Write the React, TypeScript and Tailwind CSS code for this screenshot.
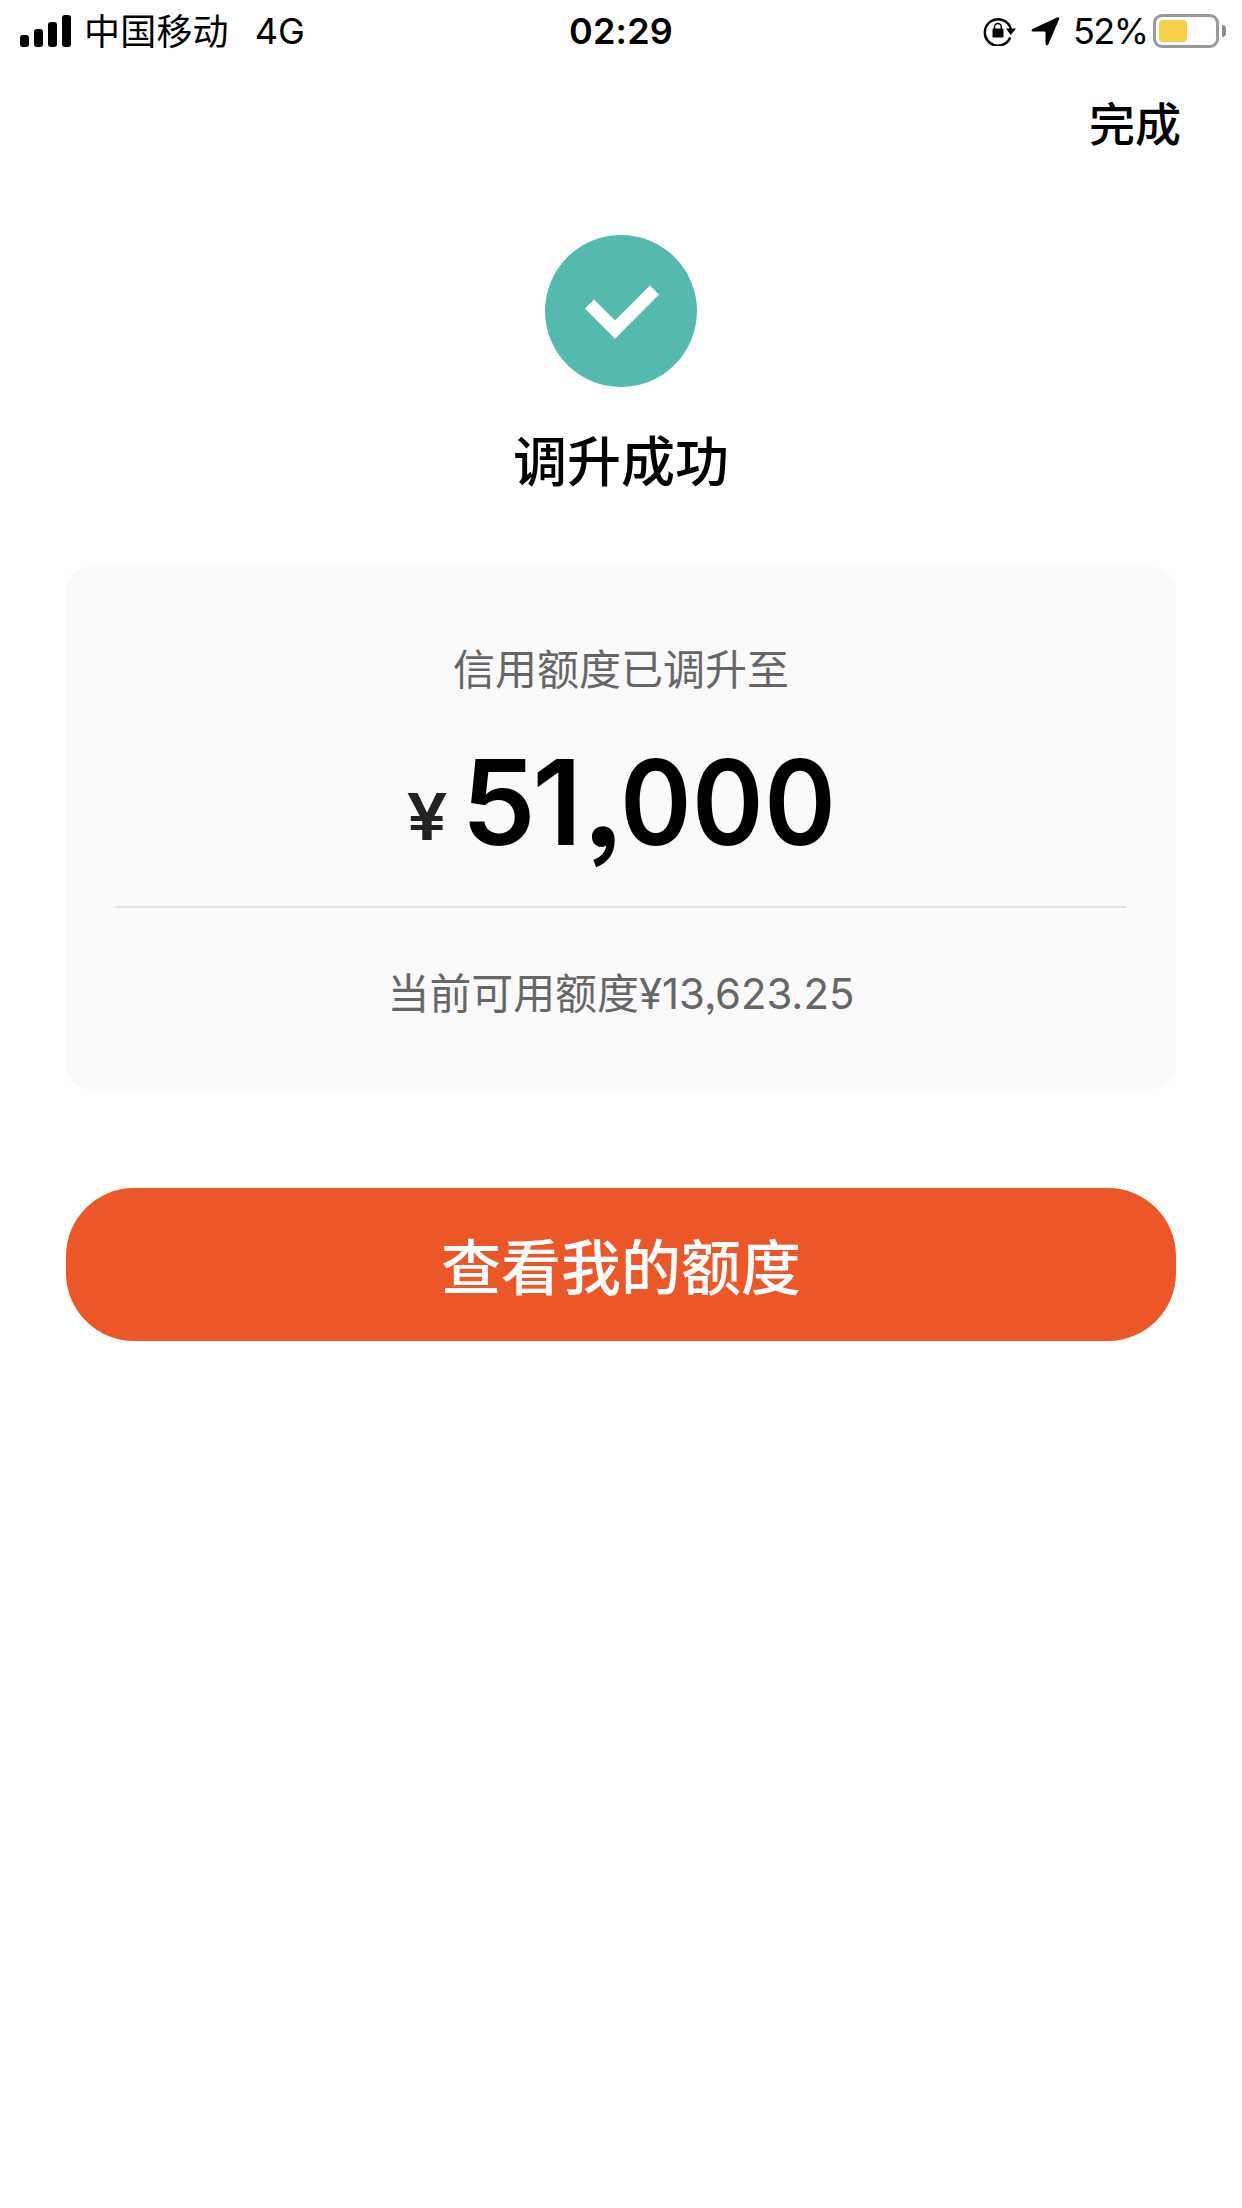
function StatusBar() {
  return (
    <header className="flex h-[62px] items-center justify-between text-[36px] leading-[62px]">
      <div className="flex w-[500px] items-center pl-5">
        <svg width="52" height="32" viewBox="0 0 52 32" fill="#000" aria-label="信号">
          <rect x="0" y="20" width="9" height="12" rx="3" />
          <rect x="14" y="14" width="9" height="18" rx="3" />
          <rect x="28" y="7" width="9" height="25" rx="3" />
          <rect x="42" y="0" width="9" height="32" rx="3" />
        </svg>
        <span className="ml-[12px] pt-[2px] leading-[60px] tracking-[0.2px]">中国移动</span>
        <span className="ml-[26px]">4G</span>
      </div>
      <time className="w-[242px] text-center font-semibold tracking-[0.2px]">02:29</time>
      <div className="flex w-[500px] items-center justify-end pr-[16px]">
        <svg width="33" height="30" viewBox="0 0 33 30" fill="none" aria-label="方向锁定">
          <path d="M27.2 21.6A13.2 13.2 0 1 1 27.800 13" stroke="#000" strokeWidth="2.5" />
          <path d="M23 12.5h10l-5.3 6.5z" fill="#000" />
          <rect x="9.5" y="12.5" width="11" height="9" rx="1.2" fill="#000" />
          <path d="M11.5 13V11a3.4 3.4 0 0 1 6.8 0v2" stroke="#000" strokeWidth="1.5" />
        </svg>
        <svg className="ml-[15px]" width="29" height="29" viewBox="0 0 29 29" aria-label="定位">
          <path d="M26.6.3Q29 0 28 2.5L17.5 27Q15.5 30 14.5 26.5V15.5Q14.5 14.5 13.5 14.5H2Q-1 13.7 2 11.7Z" fill="#000" />
        </svg>
        <span className="ml-[13px] w-[74px] tracking-[-1.6px]">52%</span>
        <div className="ml-[6px] flex h-[34px] w-[66px] items-center rounded-[9px] border-[3px] border-[#999] p-[3px]">
          <div className="h-[22px] w-[28px] rounded-[4px] bg-[#f8cf47]" />
        </div>
        <div className="ml-[3px] h-[12px] w-[4px] rounded-r-full bg-[#8b8b8b]" />
      </div>
    </header>
  );
}

export default function App() {
  return (
    <main className="flex h-[2208px] w-[1242px] flex-col bg-white font-['Inter','Noto_Sans_CJK_SC',sans-serif] text-black">
      <StatusBar />
      <nav className="flex h-[124px] justify-end pr-[61px]">
        <button className="h-[124px] text-[46px] leading-[124px] font-medium">完成</button>
      </nav>

      <section className="flex flex-col items-center pt-[49px]">
        <svg width="152" height="152" viewBox="0 0 152 152" aria-label="成功">
          <circle cx="76" cy="76" r="76" fill="#56b9ae" />
          <path d="M44.5 69 70 94.5 109.500 55" fill="none" stroke="#fff" strokeWidth="13" />
        </svg>
        <h1 className="mt-[35px] text-[54px] leading-[82px] font-medium">调升成功</h1>
      </section>

      <section className="mx-[66px] mt-[63px] flex h-[522px] flex-col items-center rounded-[24px] bg-[#fafafa] px-[50px]">
        <p className="mt-[71px] text-[42px] leading-[64px] text-[#666]">信用额度已调升至</p>
        <div className="mt-[31px] flex h-[138px] items-baseline leading-[138px]">
          <span className="-translate-y-[5px] scale-x-[1.14] text-[64px] font-semibold text-[#222]">¥</span>
          <strong className="ml-[16px] flex w-[371px] text-[118px] font-[580] tracking-[-3.4px] whitespace-nowrap [font-feature-settings:'ss03']">
            <span>51</span>
            <span className="ml-[6px] origin-[50%_78%] scale-[1.15]">,</span>
            <span className="ml-[1px] origin-left scale-x-[0.92] tracking-[0.5px]">000</span>
          </strong>
        </div>
        <hr className="mt-[35px] w-full border-t-2 border-[#e3e3e3]" />
        <p className="mt-[54px] text-[41.900px] leading-[64px] text-[#666] [font-feature-settings:'ss03']">当前可用额度¥13,623.25</p>
      </section>

      <button className="mx-[66px] mt-[99px] h-[153px] rounded-[68px] bg-[#eb5729] pt-[8px] text-[60px] leading-[145px] font-medium text-white">
        查看我的额度
      </button>
    </main>
  );
}
